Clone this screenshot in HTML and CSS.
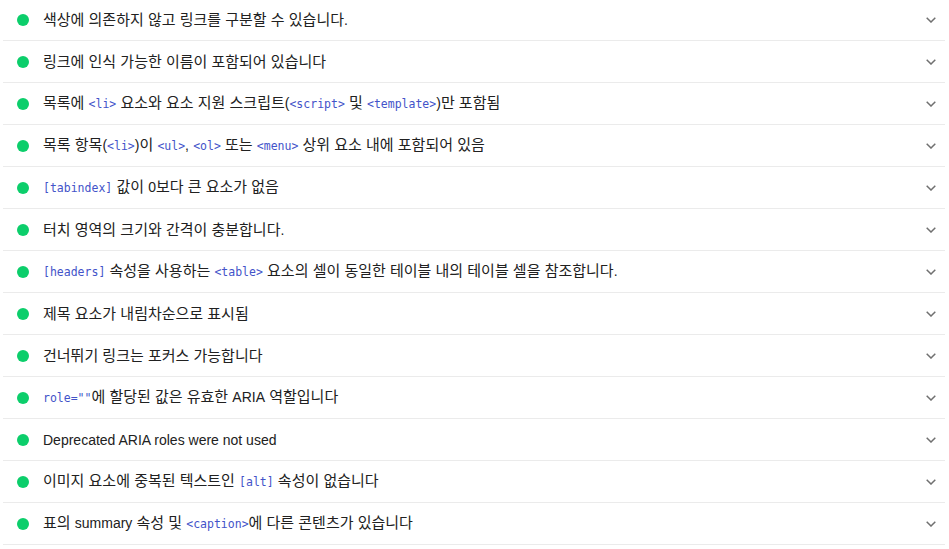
FILE: index.html
```html
<!DOCTYPE html>
<html lang="ko">
<head>
<meta charset="utf-8">
<link rel="stylesheet" href="styles.css">
</head>
<body>
<div class="audits">
  <div class="audit"><span class="dot"></span><span class="title">색상에 의존하지 않고 링크를 구분할 수 있습니다<span class="en">.</span></span><svg class="chev" viewBox="0 0 10 6"><polyline points="0.7,0.7 5,5 9.3,0.7"/></svg></div>
  <div class="audit"><span class="dot"></span><span class="title">링크에 인식 가능한 이름이 포함되어 있습니다</span><svg class="chev" viewBox="0 0 10 6"><polyline points="0.7,0.7 5,5 9.3,0.7"/></svg></div>
  <div class="audit"><span class="dot"></span><span class="title">목록에 <code>&lt;li&gt;</code> 요소와 요소 지원 스크립트<span class="en">(</span><code>&lt;script&gt;</code> 및 <code>&lt;template&gt;</code><span class="en">)</span>만 포함됨</span><svg class="chev" viewBox="0 0 10 6"><polyline points="0.7,0.7 5,5 9.3,0.7"/></svg></div>
  <div class="audit"><span class="dot"></span><span class="title">목록 항목<span class="en">(</span><code>&lt;li&gt;</code><span class="en">)</span>이 <code>&lt;ul&gt;</code><span class="en">,</span> <code>&lt;ol&gt;</code> 또는 <code>&lt;menu&gt;</code> 상위 요소 내에 포함되어 있음</span><svg class="chev" viewBox="0 0 10 6"><polyline points="0.7,0.7 5,5 9.3,0.7"/></svg></div>
  <div class="audit"><span class="dot"></span><span class="title"><code>[tabindex]</code> 값이 <span class="en">0</span>보다 큰 요소가 없음</span><svg class="chev" viewBox="0 0 10 6"><polyline points="0.7,0.7 5,5 9.3,0.7"/></svg></div>
  <div class="audit"><span class="dot"></span><span class="title">터치 영역의 크기와 간격이 충분합니다<span class="en">.</span></span><svg class="chev" viewBox="0 0 10 6"><polyline points="0.7,0.7 5,5 9.3,0.7"/></svg></div>
  <div class="audit"><span class="dot"></span><span class="title"><code>[headers]</code> 속성을 사용하는 <code>&lt;table&gt;</code> 요소의 셀이 동일한 테이블 내의 테이블 셀을 참조합니다<span class="en">.</span></span><svg class="chev" viewBox="0 0 10 6"><polyline points="0.7,0.7 5,5 9.3,0.7"/></svg></div>
  <div class="audit"><span class="dot"></span><span class="title">제목 요소가 내림차순으로 표시됨</span><svg class="chev" viewBox="0 0 10 6"><polyline points="0.7,0.7 5,5 9.3,0.7"/></svg></div>
  <div class="audit"><span class="dot"></span><span class="title">건너뛰기 링크는 포커스 가능합니다</span><svg class="chev" viewBox="0 0 10 6"><polyline points="0.7,0.7 5,5 9.3,0.7"/></svg></div>
  <div class="audit"><span class="dot"></span><span class="title"><code>role=""</code>에 할당된 값은 유효한 <span class="en">ARIA</span> 역할입니다</span><svg class="chev" viewBox="0 0 10 6"><polyline points="0.7,0.7 5,5 9.3,0.7"/></svg></div>
  <div class="audit"><span class="dot"></span><span class="title"><span class="en">Deprecated ARIA roles were not used</span></span><svg class="chev" viewBox="0 0 10 6"><polyline points="0.7,0.7 5,5 9.3,0.7"/></svg></div>
  <div class="audit"><span class="dot"></span><span class="title">이미지 요소에 중복된 텍스트인 <code>[alt]</code> 속성이 없습니다</span><svg class="chev" viewBox="0 0 10 6"><polyline points="0.7,0.7 5,5 9.3,0.7"/></svg></div>
  <div class="audit"><span class="dot"></span><span class="title">표의 <span class="en">summary</span> 속성 및 <code>&lt;caption&gt;</code>에 다른 콘텐츠가 있습니다</span><svg class="chev" viewBox="0 0 10 6"><polyline points="0.7,0.7 5,5 9.3,0.7"/></svg></div>
</div>
</body>
</html>
```
FILE: styles.css
```css
html, body {
  margin: 0;
  padding: 0;
  background: #ffffff;
}
body {
  font-family: "Liberation Sans", Arial, "Noto Sans CJK KR", sans-serif;
  font-size: 14px;
  color: #212121;
  overflow: hidden;
}
.audits {
  margin: -1px 4px 0 3px;
}
.audit {
  display: flex;
  align-items: center;
  height: 41px;
  border-bottom: 1px solid #ebebeb;
  padding: 0 9px 0 14px;
}
.dot {
  flex: none;
  width: 12px;
  height: 12px;
  border-radius: 50%;
  background: #0cce6b;
  margin-right: 14px;
}
.title {
  flex: 1;
  white-space: nowrap;
  line-height: 20px;
  font-size: 15px;
}
.en {
  font-size: 14px;
}
code {
  font-family: "DejaVu Sans Mono", "Liberation Mono", monospace;
  font-size: 11.5px;
  color: #4353c9;
}
.chev {
  flex: none;
  width: 10px;
  height: 6px;
  fill: none;
  stroke: #707070;
  stroke-width: 1.5;
}
```
